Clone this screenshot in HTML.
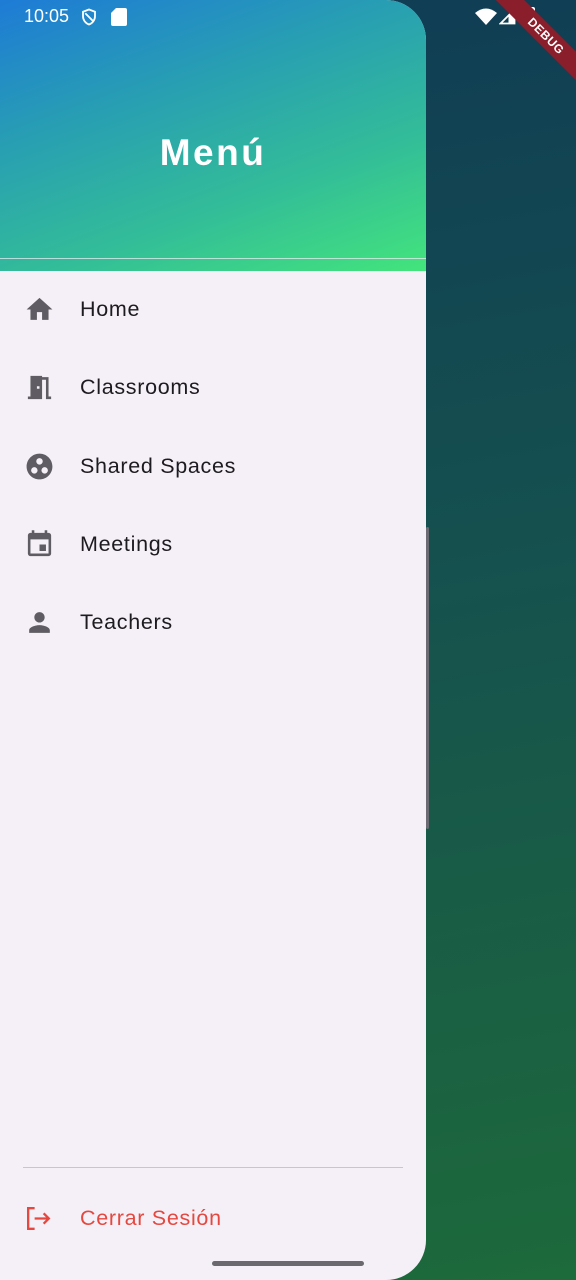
<!DOCTYPE html>
<html><head><meta charset="utf-8"><style>
*{margin:0;padding:0;box-sizing:border-box}
body{width:576px;height:1280px;overflow:hidden;position:relative;font-family:"Liberation Sans",sans-serif;background:linear-gradient(170deg,#0f3b55 0%,#15504f 45%,#1d6a3b 100%)}
.drawer{position:absolute;left:0;top:0;width:426px;height:1280px;background:#f5f0f7;border-radius:0 40px 40px 0;overflow:hidden}
.header{position:absolute;left:0;top:0;width:426px;height:271px;background:linear-gradient(160deg,#1e7bd6 0%,#289fb2 35%,#33bd98 68%,#43e47c 100%)}
.hline{position:absolute;left:0;top:258px;width:426px;height:1px;background:rgba(230,235,240,.75)}
.title{position:absolute;left:0;width:426px;top:132px;text-align:center;color:#fff;font-weight:bold;font-size:37px;letter-spacing:2.5px}
.item{position:absolute;left:0;width:426px;height:40px;display:flex;align-items:center}
.item svg{position:absolute;left:24px;width:31px;height:31px}
.item span{position:absolute;left:80px;font-size:21.5px;color:#1d1b20;letter-spacing:.7px}
.div{position:absolute;left:23px;top:1167px;width:380px;height:1px;background:#cac4d0}
.handle{position:absolute;left:212px;top:1261px;width:152px;height:5px;border-radius:3px;background:#6b686e}
.sb{position:absolute;top:6px;color:#fff;font-size:18px}
.edge{position:absolute;left:426px;top:527px;width:3px;height:302px;background:#6c6a72;border-radius:2px}
.debug{position:absolute;right:-40px;top:26px;width:140px;height:20px;background:#8b1e2b;transform:rotate(45deg);color:#fff;font-size:12px;font-weight:bold;text-align:center;line-height:20px;letter-spacing:.5px}
</style></head><body>
<div class="edge"></div>
<div class="drawer">
 <div class="header"><div class="hline"></div><div class="title">Menú</div></div>
 <div class="item" style="top:289px"><svg viewBox="0 0 24 24"><path fill="#5f5d63" d="M10 20v-6h4v6h5v-8h3L12 3 2 12h3v8z"/></svg><span>Home</span></div>
 <div class="item" style="top:367px"><svg viewBox="0 0 24 24"><path fill="#5f5d63" d="M14 6v15H3v-2h2V3h9v1h5v15h2v2h-4V6h-3zm-4 5v2h2v-2h-2z"/></svg><span>Classrooms</span></div>
 <div class="item" style="top:446px"><svg viewBox="0 0 24 24"><path fill="#5f5d63" d="M12 2C6.48 2 2 6.48 2 12s4.48 10 10 10 10-4.48 10-10S17.52 2 12 2zM8 17.5a2.5 2.5 0 1 1 0-5 2.5 2.5 0 0 1 0 5zM9.5 8a2.5 2.5 0 1 1 5 0 2.5 2.5 0 0 1-5 0zm6.5 9.5a2.5 2.5 0 1 1 0-5 2.5 2.5 0 0 1 0 5z"/></svg><span>Shared Spaces</span></div>
 <div class="item" style="top:524px"><svg viewBox="0 0 24 24"><path fill="#5f5d63" d="M17 12h-5v5h5v-5zM16 1v2H8V1H6v2H5c-1.11 0-1.990.9-1.99 2L3 19a2 2 0 0 0 2 2h14c1.1 0 2-.9 2-2V5c0-1.1-.9-2-2-2h-1V1h-2zm3 18H5V8h14v11z"/></svg><span>Meetings</span></div>
 <div class="item" style="top:602px"><svg viewBox="0 0 24 24"><path fill="#5f5d63" d="M12 12c2.21 0 4-1.79 4-4s-1.790-4-4-4-4 1.79-4 4 1.79 4 4 4zm0 2c-2.67 0-8 1.34-8 4v2h16v-2c0-2.66-5.33-4-8-4z"/></svg><span>Teachers</span></div>
 <div class="div"></div>
 <div class="item" style="top:1198px"><svg viewBox="0 0 24 24" style="left:23px"><path fill="none" stroke="#e5483f" stroke-width="1.8" d="M9 4H4v16h5M9 12h11M16 8l4 4-4 4"/></svg><span style="color:#e5483f">Cerrar Sesión</span></div>
 <div class="handle"></div>
</div>
<div class="sb" style="left:24px">10:05</div>
<svg style="position:absolute;left:80px;top:8px" width="18" height="18" viewBox="0 0 24 24"><path fill="none" stroke="#fff" stroke-width="2.4" d="M12 2 4 5v6c0 5 3.4 9.5 8 11 4.6-1.5 8-6 8-11V5z M7 7l10 10"/></svg>
<svg style="position:absolute;left:111px;top:8px" width="16" height="18" viewBox="0 0 16 18"><path fill="#fff" d="M5 0h9a2 2 0 0 1 2 2v14a2 2 0 0 1-2 2H2a2 2 0 0 1-2-2V5z"/></svg>
<svg style="position:absolute;left:475px;top:8px" width="22" height="17" viewBox="0 0 22 17"><path fill="#fff" d="M0 5Q11-4 22 5L11 17z"/></svg>
<svg style="position:absolute;left:499px;top:8px" width="17" height="17" viewBox="0 0 17 17"><path fill="none" stroke="#fff" stroke-width="1.8" d="M15.5 1.5v14h-14z"/><path fill="#fff" d="M15.5 1.5v14h-6V7.5z"/></svg>
<div style="position:absolute;left:524px;top:7px;width:11px;height:19px;background:#fff;border-radius:2px"></div>
<div class="debug">DEBUG</div>
</body></html>
